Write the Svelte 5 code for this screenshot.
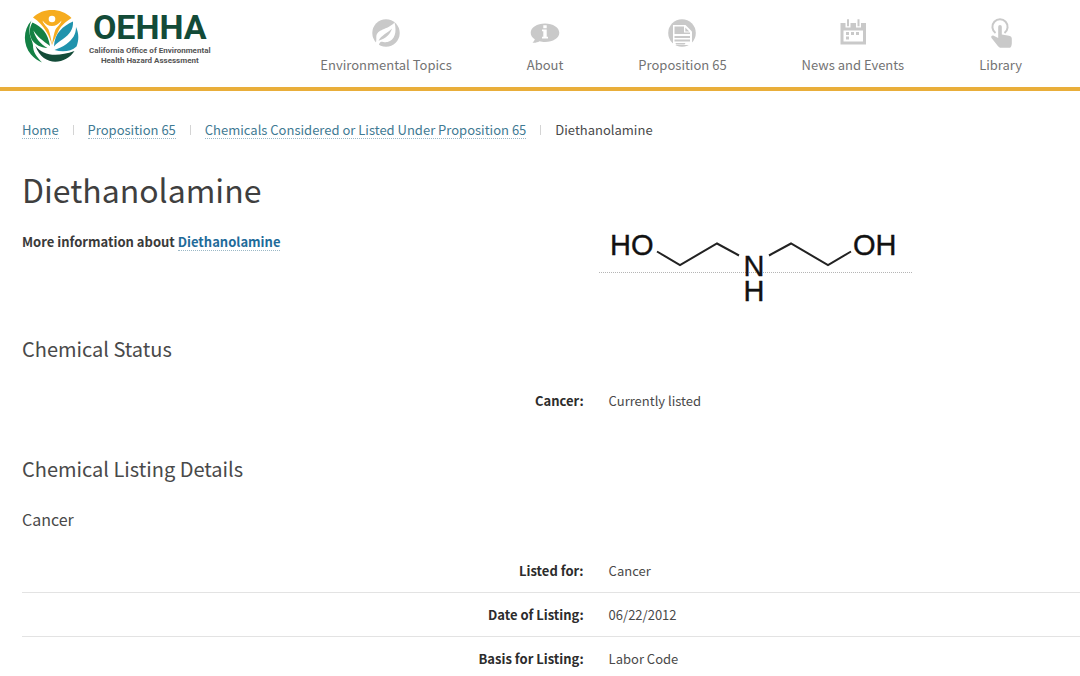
<script>
  const crumbs = [
    'Home',
    'Proposition 65',
    'Chemicals Considered or Listed Under Proposition 65',
  ];
  const nav = [
    { icon: 'leaf', label: 'Environmental Topics' },
    { icon: 'info', label: 'About' },
    { icon: 'document', label: 'Proposition 65' },
    { icon: 'calendar', label: 'News and Events' },
    { icon: 'touch', label: 'Library' },
  ];
  const details = [
    ['Listed for:', 'Cancer'],
    ['Date of Listing:', '06/22/2012'],
    ['Basis for Listing:', 'Labor Code'],
  ];
</script>

<header>
  <a class="brand" href="#home">
    <svg class="emblem" viewBox="0 0 56 56" aria-hidden="true">
      <path fill="#f6ac1f" d="M9 9.500C19-.5 37-.5 47.500 10c-6 4-11 8-13.500 14-2 4-4 8-6 13-1.500-5-3-9-5.500-13C19 18 15 13.500 9 9.500Z" />
      <circle cx="28" cy="11" r="3.300" fill="#fff" />
      <path fill="#fff" d="M18.500 12.500c3 4 6 5.500 9.500 5.500s6.500-1.500 9.500-5.500c-1 4-4.500 6-6 9-1.500 3.500-2.500 9-3.500 15.500-1-6.500-2-12-3.500-15.500-1.500-3-5-5-6-9Z" />
      <path fill="#138044" d="M7.500 12.500C-1 22-1.500 36 7 46.500c3 3.500 7 6.500 11 8C12 48 9 44 9 37.500 9 34 6 30 5.500 24c-.3-5 .5-8 2-11.500Z" />
      <path fill="#138044" d="M8.500 14.500C18 19 24 25 26 38 19 33 12.500 28 9.500 22.500c2 8 7 13.500 14 17.500-7-.5-12-3-15.500-8C4.500 26 5.500 19 8.500 14.500Z" />
      <path fill="#2093ad" d="M49 13.500C39 18 30.500 25 30 38.500c2.500-3.500 5.500-5 9-7.500 6.500-4.500 10.500-9.500 10-17.500Z" />
      <path fill="#2093ad" d="M52 19c3 6.500 3 13.500.5 19.500-5.500 5-14 6-22 3.500 4-1.500 8-3 12-6 6-4.500 9.500-9.500 9.500-17Z" />
      <path fill="#134b38" d="M11.500 38C19 47.500 32 49.500 50.500 43 42 56.500 19 59.500 11.500 38Z" />
    </svg>
    <span class="wordmark">
      <strong>OEHHA</strong>
      <small>California Office of Environmental<br />Health Hazard Assessment</small>
    </span>
  </a>
  <nav aria-label="Main">
    {#each nav as item}
      <a href="#{item.icon}">
        <svg viewBox="0 0 30 30" aria-hidden="true">
          {#if item.icon === 'leaf'}
            <circle cx="15" cy="15" r="13.700" />
            <path class="cut" d="M23.500 4.500c2.500 9 .5 18-7 19.500-3 .5-5-.5-6.500-.3-1.500.8-2 2.500-2.500 4.800L4.500 26c1-2.500.8-4.500.8-7C5.800 10.500 16 12.500 23.500 4.500Z" />
            <path d="M21 10.500c-2 6-6 10-13.500 12.200C10.500 17 16 15.500 21 10.500Z" />
          {:else if item.icon === 'info'}
            <path d="M15 5.500c8 0 14.300 4 14.300 9.300S23 24 15 24c-2 0-4-.2-5.500-.7C7.500 24.500 5 25 2.500 24.700c1-1 2-2 2.300-3.400C2.300 19.700.7 17.400.7 14.800.7 9.500 7 5.500 15 5.500Z" />
            <path class="cut" d="M13.300 7.300h3.400v2.900h-3.400ZM12 11.500h4.700v7.300H18v1.700h-6v-1.700h1.300v-5.600H12Z" />
          {:else if item.icon === 'document'}
            <circle cx="15" cy="15" r="13.800" />
            <path class="cut" d="M6 7h12.500l6.500 6.500V25.500l-2 1.500H6Z" />
            <path d="M7.500 8.500H17v6h6v1.500H7.500ZM18.300 9.500l4 4h-4ZM7.500 18h15.500v2H7.500ZM7.500 21.500h15.500v2H7.500ZM8.500 25h10l-1 1.500H9Z" />
          {:else if item.icon === 'calendar'}
            <path fill-rule="evenodd" d="M2.500 5H28v21.500H2.500Zm3 7.500v11h19.500v-11Z" />
            <path class="cut" d="M7.500 2.500h5v7h-5ZM18 2.500h5v7h-5Z" />
            <path d="M9 1.300h2v7H9ZM19.500 1.300h2v7h-2ZM8 14h3v3H8Zm5 0h3v3h-3Zm5 0h3v3h-3ZM8 18.500h3v3H8Z" />
          {:else}
            <path fill="none" stroke="#c9c9c9" stroke-width="2" d="M9.500 15a7.600 7.600 0 1 1 9 0" />
            <path d="M12.200 8.800a1.800 1.800 0 0 1 3.600 0v7.700l7.200 1.200c2 .4 2.800 1.500 2.800 3v5c-.3 2.500-.8 3.500-1.800 4h-10c-1.500-1-2.500-2-3.500-3.500L5.500 20c-1-1.700.5-3 2.200-2.300l4.500 2.300Z" />
          {/if}
        </svg>
        {item.label}
      </a>
    {/each}
  </nav>
</header>

<main>
  <ol class="crumbs">
    {#each crumbs as crumb}
      <li><a href="#crumb">{crumb}</a></li>
    {/each}
    <li>Diethanolamine</li>
  </ol>

  <h1>Diethanolamine</h1>

  <div class="intro">
    <p>More information about <a href="#more">Diethanolamine</a></p>
    <a class="molecule" href="#structure" aria-label="Structure of diethanolamine">
      <svg viewBox="0 0 313 80">
        <line class="rule" x1="0" y1="46.500" x2="313" y2="46.500" />
        <path d="M58 25.500 81 39 118 17.500 140 29.500M170 29.500 192 17.500 229 39 252 25.500" />
        <text x="11" y="29">HO</text>
        <text x="254" y="29">OH</text>
        <text x="155" y="50" text-anchor="middle">N</text>
        <text x="155" y="75" text-anchor="middle">H</text>
      </svg>
    </a>
  </div>

  <h2>Chemical Status</h2>
  <table>
    <tbody>
      <tr><th scope="row">Cancer:</th><td>Currently listed</td></tr>
    </tbody>
  </table>

  <h2 class="next">Chemical Listing Details</h2>
  <h3>Cancer</h3>
  <table>
    <tbody>
      {#each details as [name, value]}
        <tr><th scope="row">{name}</th><td>{value}</td></tr>
      {/each}
    </tbody>
  </table>
</main>

<style>
  :global(body) {
    margin: 0;
    background: #fff;
    color: #494949;
    font: 13px/20px "Noto Sans CJK SC", "Open Sans", sans-serif;
  }
  header {
    display: flex;
    justify-content: space-between;
    align-items: flex-start;
    padding: 8px 58px 12px 24px;
    border-bottom: 4px solid #e9ae3a;
  }
  .brand {
    display: flex;
    gap: 9px;
    text-decoration: none;
  }
  .emblem {
    width: 56px;
    height: 56px;
  }
  .wordmark {
    text-align: center;
  }
  strong {
    display: block;
    color: #134b38;
    font: bold 34px/38px Roboto, "Liberation Sans", sans-serif;
  }
  small {
    display: block;
    color: #555;
    font: bold 8px/10px Roboto, "Liberation Sans", sans-serif;
  }
  nav {
    display: flex;
    gap: 75px;
    padding-top: 10px;
  }
  nav a {
    display: flex;
    flex-direction: column;
    align-items: center;
    gap: 7px;
    color: #737373;
    text-decoration: none;
  }
  nav svg {
    width: 30px;
    height: 30px;
    fill: #c9c9c9;
  }
  .cut {
    fill: #fff;
  }
  main {
    padding: 29px 0 0 22px;
  }
  a {
    color: #3f7a93;
    text-decoration: none;
  }
  .crumbs {
    display: flex;
    margin: 0;
    padding: 0;
    list-style: none;
  }
  .crumbs a,
  p a {
    display: inline-block;
    line-height: 16px;
    border-bottom: 1px dotted #9bb8c6;
  }
  .crumbs li + li {
    display: flex;
    align-items: center;
  }
  .crumbs li + li::before {
    content: "";
    width: 1px;
    height: 10px;
    margin: 0 14px;
    background: #d4d4d4;
  }
  h1,
  h2,
  h3,
  p {
    margin: 0;
    font-weight: 400;
  }
  h1 {
    margin-top: 29px;
    color: #3f3f3f;
    font-size: 32px;
    line-height: 40px;
  }
  .intro {
    display: grid;
    grid-template-columns: 54.5% 1fr;
    padding-top: 17px;
  }
  p {
    padding-top: 6px;
    color: #3a3a3a;
    font-weight: 700;
  }
  p a {
    color: #1f6b9a;
  }
  .molecule svg {
    display: block;
    width: 313px;
    height: 80px;
    font: 29px "Liberation Sans", sans-serif;
    fill: #111;
  }
  .molecule text {
    stroke: #111;
    stroke-width: 0.4;
  }
  .molecule path {
    fill: none;
    stroke: #222;
    stroke-width: 2;
  }
  .molecule .rule {
    stroke: #b5b5b5;
    stroke-dasharray: 1 1;
  }
  h2 {
    margin-top: 28px;
    font-size: 20px;
    line-height: 30px;
  }
  .next {
    margin-top: 32px;
  }
  h3 {
    margin-top: 23px;
    font-size: 16px;
    line-height: 24px;
  }
  table {
    width: 100%;
    margin-top: 15px;
    border-collapse: collapse;
  }
  h3 + table {
    margin-top: 18px;
  }
  th,
  td {
    padding: 12px 15px 11px 10px;
    text-align: left;
  }
  th {
    width: 54.5%;
    box-sizing: border-box;
    color: #2c2c2c;
    text-align: right;
  }
  tr + tr {
    border-top: 1px solid #e3e3e3;
  }
</style>
